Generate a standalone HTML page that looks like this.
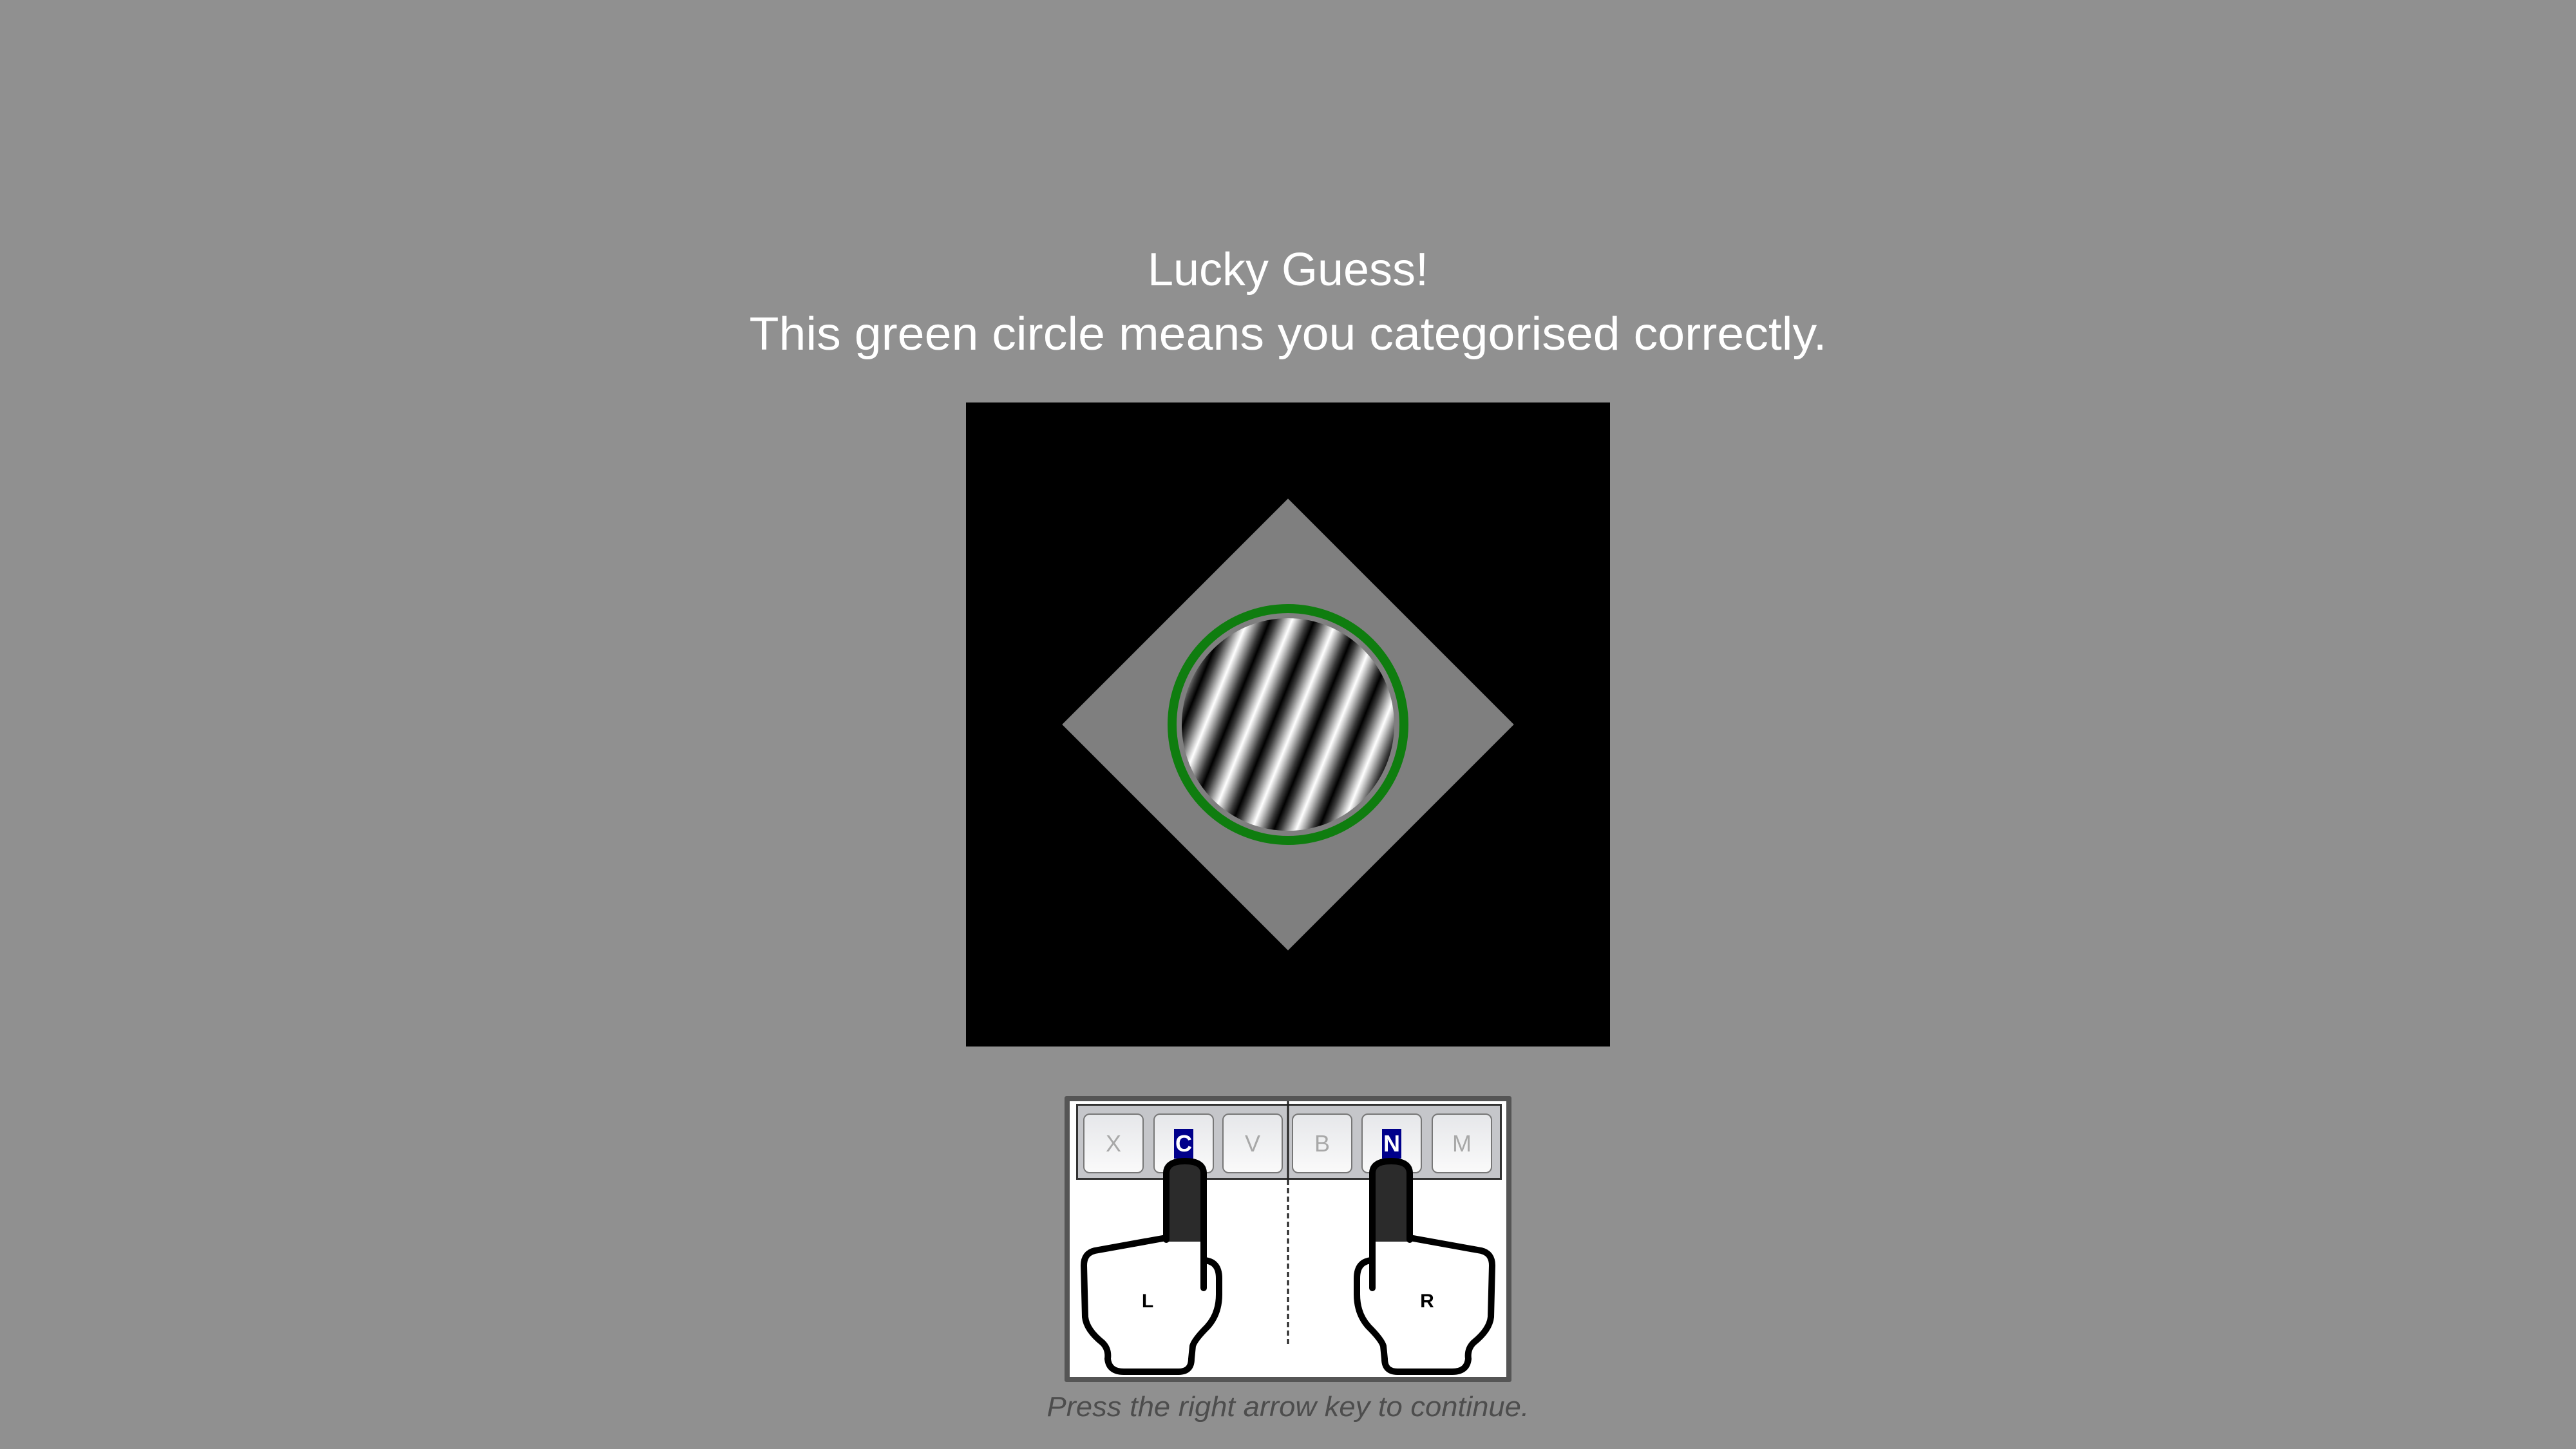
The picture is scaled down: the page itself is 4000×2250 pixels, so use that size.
<!DOCTYPE html>
<html><head><meta charset="utf-8"><style>
html,body{margin:0;padding:0;}
body{width:4000px;height:2250px;background:#909090;position:relative;overflow:hidden;font-family:"Liberation Sans",sans-serif;}
.blk{position:absolute;left:1500px;top:625px;width:1000px;height:1000px;background:#000;}
.dia{position:absolute;left:1752px;top:877px;width:496px;height:496px;background:#7f7f7f;transform:rotate(45deg);}
.ring{position:absolute;left:1813px;top:938px;width:346px;height:346px;border:14px solid #0f7d0f;border-radius:50%;}
.grat{position:absolute;left:1835px;top:960px;width:330px;height:330px;border-radius:50%;
background:repeating-linear-gradient(112deg,#000 0px,#3a3a3a 9px,#bdbdbd 24px,#fff 32px,#bdbdbd 40px,#3a3a3a 55px,#000 64px);}
.panel{position:absolute;left:1653px;top:1702px;width:678px;height:428px;border:8px solid #555;background:#fff;border-radius:3px;}
.strip{position:absolute;left:1671px;top:1714px;width:655px;height:112px;background:#c5c6ca;border:3px solid #333;}
.key{position:absolute;top:1729px;width:90px;height:89px;border:2px solid #777;border-radius:10px;background:linear-gradient(#e6e7ea,#fafafa);font-size:36px;color:#a8a8a8;text-align:center;line-height:89px;}
.hl{display:inline-block;background:#00008b;color:#fff;font-weight:bold;line-height:46px;padding:0 2px;}
</style></head><body>
<svg width="4000" height="700" style="position:absolute;left:0;top:0">
<text x="2000" y="443" font-family="Liberation Sans" font-size="72" fill="#fff" text-anchor="middle" textLength="436" lengthAdjust="spacingAndGlyphs">Lucky Guess!</text>
<text x="2000" y="543" font-family="Liberation Sans" font-size="72" fill="#fff" text-anchor="middle" textLength="1673" lengthAdjust="spacingAndGlyphs">This green circle means you categorised correctly.</text>
</svg>
<div class="blk"></div>
<div class="dia"></div>
<div class="ring"></div>
<div class="grat"></div>
<div class="panel"></div>
<div class="strip"></div>
<div class="key" style="left:1682px">X</div>
<div class="key" style="left:1791px"><span class="hl">C</span></div>
<div class="key" style="left:1898px">V</div>
<div class="key" style="left:2006px">B</div>
<div class="key" style="left:2114px"><span class="hl">N</span></div>
<div class="key" style="left:2223px">M</div>
<svg width="4000" height="2250" style="position:absolute;left:0;top:0">
<line x1="2000" y1="1710" x2="2000" y2="1832" stroke="#222" stroke-width="3"/>
<line x1="2000" y1="1832" x2="2000" y2="2088" stroke="#222" stroke-width="3" stroke-dasharray="8,5"/>
<g id="h">
<path d="M1811,1922 L1700,1942 Q1683,1946 1683,1965 L1685,2045 Q1687,2065 1712,2085 Q1722,2095 1720,2110 Q1722,2130 1745,2130 L1830,2130 Q1850,2130 1850,2110 L1852,2090 Q1855,2080 1875,2060 Q1893,2040 1893,2010 L1893,1985 Q1893,1958 1869,1957" fill="#fff" stroke="#000" stroke-width="10" stroke-linejoin="round"/>
<path d="M1811,1928 L1811,1822 Q1811,1803 1840,1803 Q1869,1803 1869,1822 L1869,1928 Z" fill="#2b2b2b"/>
<path d="M1811,1925 L1811,1822 Q1811,1803 1840,1803 Q1869,1803 1869,1822 L1869,2000" fill="none" stroke="#000" stroke-width="10" stroke-linecap="round"/>
</g>
<use href="#h" transform="translate(4000,0) scale(-1,1)"/>
<text x="1782" y="2030" font-family="Liberation Sans" font-weight="bold" font-size="30" text-anchor="middle">L</text>
<text x="2216" y="2030" font-family="Liberation Sans" font-weight="bold" font-size="30" text-anchor="middle">R</text>
<text x="2000" y="2199" font-family="Liberation Sans" font-style="italic" font-size="44" fill="#4d4d4d" text-anchor="middle" textLength="749" lengthAdjust="spacingAndGlyphs">Press the right arrow key to continue.</text>
</svg>
</body></html>
